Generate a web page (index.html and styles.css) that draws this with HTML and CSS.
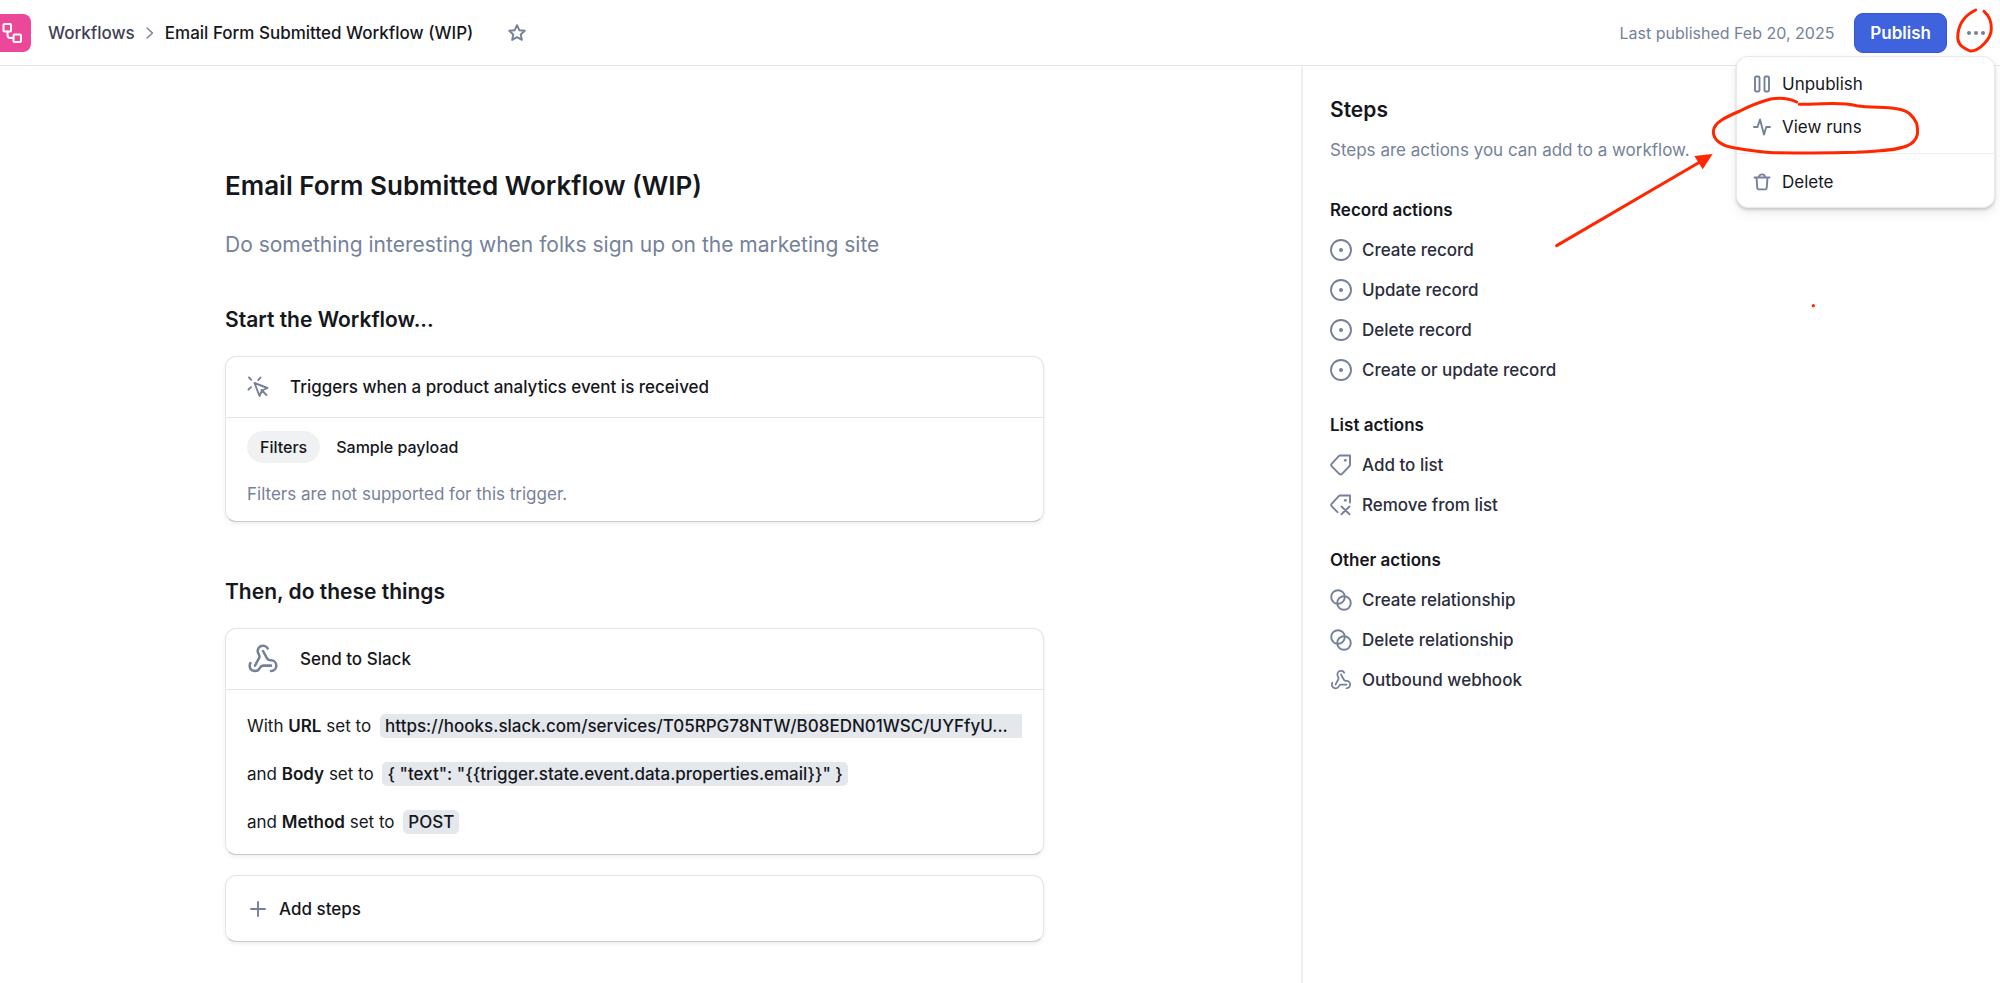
FILE: index.html
```html
<!DOCTYPE html>
<html lang="en">
<head>
  <meta charset="UTF-8">
  <meta name="viewport" content="width=device-width, initial-scale=1.0">
  <title>Email Form Submitted Workflow (WIP)</title>
  <link rel="stylesheet" href="styles.css">
</head>
<body>

<!-- Shared icons -->
<svg class="sprite" aria-hidden="true">
  <symbol id="icon-record" viewBox="0 0 22 22">
    <circle cx="11" cy="11" r="10"/>
    <circle cx="11" cy="11" r="2" fill="currentColor" stroke="none"/>
  </symbol>
  <symbol id="icon-tag" viewBox="0 0 22 22">
    <path d="M10.3 1.5H20v9.2a2 2 0 0 1-.6 1.4l-7.3 7.8a2 2 0 0 1-2.9 0l-7.4-7.5a2 2 0 0 1 0-2.8l7-7.5a2 2 0 0 1 1.5-.6z"/>
    <circle cx="15.3" cy="6.3" r="1.4" fill="currentColor" stroke="none"/>
  </symbol>
  <symbol id="icon-tag-remove" viewBox="0 0 22 22">
    <path d="M20 8.5v-7h-9.7a2 2 0 0 0-1.5.6l-7 7.5a2 2 0 0 0 0 2.8l5.7 5.8"/>
    <circle cx="15.3" cy="6.3" r="1.4" fill="currentColor" stroke="none"/>
    <path d="M11.5 12.5l8 7.8M19.5 12.5l-8 7.8"/>
  </symbol>
  <symbol id="icon-relation" viewBox="0 0 22 22">
    <circle cx="8" cy="8" r="6.8"/>
    <circle cx="14" cy="14" r="6.8"/>
  </symbol>
  <symbol id="icon-webhook" viewBox="0 0 24 24">
    <path d="M18 16.98h-5.99c-1.1 0-1.95.94-2.48 1.9A4 4 0 0 1 2 17c.01-.7.2-1.4.57-2"/>
    <path d="m6 17 3.13-5.78c.53-.97.1-2.18-.5-3.1a4 4 0 1 1 6.89-4.06"/>
    <path d="m12 6 3.13 5.73C15.66 12.7 16.9 13 18 13a4 4 0 0 1 0 8"/>
  </symbol>
</svg>

<header class="topbar">
  <div class="logo">
    <svg class="icon" width="20" height="20" viewBox="0 0 20 20">
      <rect x="1.5" y="1" width="7.5" height="7.5" rx="1"/>
      <rect x="11.5" y="11.5" width="7.5" height="7.5" rx="1"/>
      <path d="M5.5 8.5v3.5a3 3 0 0 0 3 3h3"/>
    </svg>
  </div>
  <nav class="breadcrumb">
    <a href="#">Workflows</a>
    <svg class="icon chevron" width="8" height="12" viewBox="0 0 8 12"><path d="M1 1l5.500 5L1 11"/></svg>
    <span>Email Form Submitted Workflow (WIP)</span>
  </nav>
  <button type="button" class="icon-button" aria-label="Favorite">
    <svg class="icon" width="18" height="18" viewBox="0 0 18 18">
      <path d="M9 1.2l2.3 5 5.5.6-4.1 3.7 1.2 5.4L9 13.2l-4.9 2.7 1.2-5.4L1.2 6.800l5.5-.6z"/>
    </svg>
  </button>
  <div class="topbar-right">
    <span class="published">Last published Feb 20, 2025</span>
    <button type="button" class="publish">Publish</button>
    <button type="button" class="icon-button" aria-label="More">
      <svg width="18" height="18" viewBox="0 0 18 18" fill="currentColor">
        <circle cx="2" cy="9" r="2"/><circle cx="9" cy="9" r="2"/><circle cx="16" cy="9" r="2"/>
      </svg>
    </button>
  </div>

  <div class="menu">
    <button type="button">
      <svg class="icon" width="18" height="18" viewBox="0 0 18 18">
        <rect x="2" y="1.5" width="4.5" height="15" rx="1.2"/><rect x="11.5" y="1.5" width="4.5" height="15" rx="1.2"/>
      </svg>
      Unpublish
    </button>
    <button type="button">
      <svg class="icon" width="18" height="18" viewBox="0 0 18 18">
        <path d="M1 9h3.5L7 1.5 11 16.5 13.3 9H17"/>
      </svg>
      View runs
    </button>
    <hr>
    <button type="button">
      <svg class="icon" width="18" height="18" viewBox="0 0 18 18">
        <path d="M1.5 4.5h15M3.5 4.5l.8 10.5a1.5 1.5 0 0 0 1.5 1.4h6.4a1.5 1.5 0 0 0 1.5-1.4l.8-10.5M6 4.2a3 2.8 0 0 1 6 0"/>
      </svg>
      Delete
    </button>
  </div>
</header>

<div class="layout">
  <main class="editor">
    <h1>Email Form Submitted Workflow (WIP)</h1>
    <p class="description">Do something interesting when folks sign up on the marketing site</p>

    <h2>Start the Workflow...</h2>
    <section class="card">
      <div class="card-header">
        <svg class="icon" width="22" height="22" viewBox="0 0 22 22">
          <path d="M7.5 7l13 5-5.5 2.5-2.5 5.5zM14.5 14l5 5M2 1.5l2.2 2.3M13.5 1.5l-2.2 2.6M1.5 13.500l2.5-2.4"/>
        </svg>
        <span>Triggers when a product analytics event is received</span>
      </div>
      <div class="trigger-body">
        <div class="tabs">
          <button type="button" class="tab active">Filters</button>
          <button type="button" class="tab">Sample payload</button>
        </div>
        <p class="hint">Filters are not supported for this trigger.</p>
      </div>
    </section>

    <h2>Then, do these things</h2>
    <section class="card">
      <div class="card-header">
        <svg class="icon" width="32" height="32"><use href="#icon-webhook"/></svg>
        <span>Send to Slack</span>
      </div>
      <div class="step-body">
        <p class="clipped"><span>With <b>URL</b> set to</span><code>https://hooks.slack.com/services/T05RPG78NTW/B08EDN01WSC/UYFfyU...</code></p>
        <p>and <b>Body</b> set to <code>{ "text": "{{trigger.state.event.data.properties.email}}" }</code></p>
        <p>and <b>Method</b> set to <code>POST</code></p>
      </div>
    </section>

    <button type="button" class="card add-steps">
      <svg class="icon" width="16" height="16" viewBox="0 0 16 16"><path d="M8 1v14M1 8h14"/></svg>
      Add steps
    </button>
  </main>

  <aside class="sidebar">
    <h2>Steps</h2>
    <p class="intro">Steps are actions you can add to a workflow.</p>

    <h3>Record actions</h3>
    <div class="actions">
      <button type="button"><svg class="icon"><use href="#icon-record"/></svg>Create record</button>
      <button type="button"><svg class="icon"><use href="#icon-record"/></svg>Update record</button>
      <button type="button"><svg class="icon"><use href="#icon-record"/></svg>Delete record</button>
      <button type="button"><svg class="icon"><use href="#icon-record"/></svg>Create or update record</button>
    </div>

    <h3>List actions</h3>
    <div class="actions">
      <button type="button"><svg class="icon"><use href="#icon-tag"/></svg>Add to list</button>
      <button type="button"><svg class="icon"><use href="#icon-tag-remove"/></svg>Remove from list</button>
    </div>

    <h3>Other actions</h3>
    <div class="actions">
      <button type="button"><svg class="icon"><use href="#icon-relation"/></svg>Create relationship</button>
      <button type="button"><svg class="icon"><use href="#icon-relation"/></svg>Delete relationship</button>
      <button type="button"><svg class="icon"><use href="#icon-webhook"/></svg>Outbound webhook</button>
    </div>
  </aside>
</div>

<!-- Red pen marks over the menu -->
<svg class="marks" width="460" height="330" viewBox="0 0 1380 990" aria-hidden="true">
  <path d="M1307 30C1278 44 1258 70 1254 100C1250 130 1262 140 1290 153C1318 154 1354 116 1354 86C1355 60 1346 46 1332 34"/>
  <path d="M770 306C745 294 712 294 692 297C660 306 630 317 600 333C560 350 520 368 520 395C520 420 545 438 585 444C620 449 650 455 700 458C790 460 870 460 950 457C1010 453 1060 453 1100 438C1140 422 1134 390 1130 370C1120 350 1106 330 1070 326C1030 321 990 323 950 317C900 305 860 313 778 313"/>
  <path d="M50 737L485 483"/>
  <path class="solid" d="M518 462L463 468L488 508z"/>
  <circle class="solid" cx="820" cy="917" r="5"/>
</svg>

</body>
</html>
```
FILE: styles.css
```css
* {
  box-sizing: border-box;
}
body {
  font-family: Inter, "Liberation Sans", sans-serif;
  font-size: 17px;
  line-height: 24px;
  font-weight: 500;
  margin: 0;
  min-height: 100vh;
  display: flex;
  flex-direction: column;
  position: relative;
  background-color: #fff;
  color: #15171c;
}
h1, h2, h3, p {
  margin: 0;
}
button {
  font: inherit;
  color: inherit;
  background: none;
  border: none;
  padding: 0;
  cursor: pointer;
}
.sprite {
  display: none;
}
.icon {
  flex: none;
  fill: none;
  stroke: currentColor;
  stroke-width: 1.9;
  stroke-linecap: round;
  stroke-linejoin: round;
  color: #75819a;
}

/* Top bar */
.topbar {
  position: relative;
  display: flex;
  align-items: center;
  height: 66px;
  border-bottom: 1px solid #e4e6ea;
  padding-right: 15px;
}
.logo {
  width: 31px;
  height: 38px;
  display: flex;
  align-items: center;
  padding-left: 2px;
  border-radius: 0 8px 8px 0;
  background-color: #ec4899;
}
.logo .icon {
  color: #fff;
  stroke-width: 2;
}
.breadcrumb {
  display: flex;
  align-items: center;
  gap: 11px;
  margin: 0 35px 0 17px;
}
.breadcrumb a {
  color: #3f4254;
  text-decoration: none;
}
.chevron {
  stroke-width: 1.4;
}
.icon-button {
  display: flex;
  color: #75819a;
}
.topbar-right {
  display: flex;
  align-items: center;
  gap: 20px;
  margin-left: auto;
}
.published {
  color: #75819a;
  font-size: 16px;
  font-weight: 400;
}
.publish {
  height: 40px;
  padding: 0 15px;
  border: 1px solid #3557d6;
  border-radius: 9px;
  background-color: #3e63dd;
  color: #fff;
  font-weight: 600;
}

/* Menu under the dots */
.menu {
  position: absolute;
  top: 56px;
  right: 5px;
  z-index: 1;
  width: 259px;
  padding: 5px 0 4px;
  border: 1px solid #e9eaed;
  border-radius: 12px;
  background-color: #fff;
  box-shadow: 0 2px 3px rgba(0, 0, 0, 0.16), 0 5px 12px rgba(0, 0, 0, 0.08);
}
.menu button {
  display: flex;
  align-items: center;
  gap: 11px;
  width: 100%;
  height: 43px;
  padding: 0 16px;
  font-weight: 400;
}
.menu hr {
  margin: 5px 0 6px;
  border: none;
  border-top: 1px solid #eceef1;
}

/* Page columns */
.layout {
  flex: 1;
  display: flex;
}
.editor {
  flex: 1;
  min-width: 0;
  padding: 100px 257px 41px 225px;
}
.sidebar {
  flex: none;
  width: 699px;
  padding: 30px 27px;
  border-left: 2px solid #eff0f2;
}

/* Editor */
h1 {
  font-size: 26px;
  line-height: 40px;
  font-weight: 600;
}
h2 {
  font-size: 21px;
  line-height: 28px;
  font-weight: 600;
}
.description {
  margin: 25px 0 47px;
  font-size: 21px;
  line-height: 28px;
  color: #75819a;
  font-weight: 400;
}
.card {
  width: 100%;
  margin-top: 22px;
  border: 1px solid #e4e6e8;
  border-bottom-color: #c8cacd;
  border-radius: 11px;
  background-color: #fff;
  box-shadow: 0 2px 4px rgba(0, 0, 0, 0.07);
}
.card + h2 {
  margin-top: 56px;
}
.card-header {
  display: flex;
  align-items: center;
  gap: 21px;
  height: 61px;
  padding: 0 21px;
  border-bottom: 1px solid #e4e6ea;
}
.trigger-body {
  padding: 13px 21px 15px;
}
.tabs {
  display: flex;
  gap: 3px;
}
.tab {
  height: 32px;
  padding: 0 13px;
  border-radius: 16px;
  font-size: 16px;
}
.tab.active {
  background-color: #f0f1f3;
}
.hint {
  margin-top: 19px;
  color: #75819a;
  font-weight: 400;
}
.step-body {
  display: flex;
  flex-direction: column;
  gap: 24px;
  padding: 24px 21px 20px;
  font-weight: 400;
}
.step-body p {
  white-space: nowrap;
}
.step-body b {
  font-weight: 600;
}
.step-body code {
  font-family: inherit;
  font-weight: 500;
  margin-left: 4px;
  padding: 2px 5px;
  border-radius: 5px;
  background-color: #e4e7ec;
}
.step-body .clipped {
  display: flex;
  gap: 5px;
}
.step-body .clipped code {
  flex: 1;
  min-width: 0;
  overflow: hidden;
  padding: 0 5px;
  border-radius: 5px 0 0 5px;
}
.add-steps {
  display: flex;
  align-items: center;
  gap: 13px;
  height: 67px;
  margin-top: 20px;
  padding: 0 24px;
}

/* Steps panel */
.intro {
  margin: 14px 0 28px;
  color: #75819a;
  font-weight: 400;
}
h3 {
  font-size: 17px;
  line-height: 40px;
  font-weight: 600;
}
.actions {
  margin-bottom: 15px;
}
.actions button {
  display: flex;
  align-items: center;
  gap: 10px;
  height: 40px;
  color: #2a2d3c;
}
.actions .icon {
  width: 22px;
  height: 22px;
}

/* Pen marks */
.marks {
  position: absolute;
  top: 0;
  right: 0;
  z-index: 2;
  pointer-events: none;
  fill: none;
  stroke: #ff2600;
  stroke-width: 9;
  stroke-linecap: round;
  stroke-linejoin: round;
}
.marks .solid {
  fill: #ff2600;
  stroke: none;
}
```
